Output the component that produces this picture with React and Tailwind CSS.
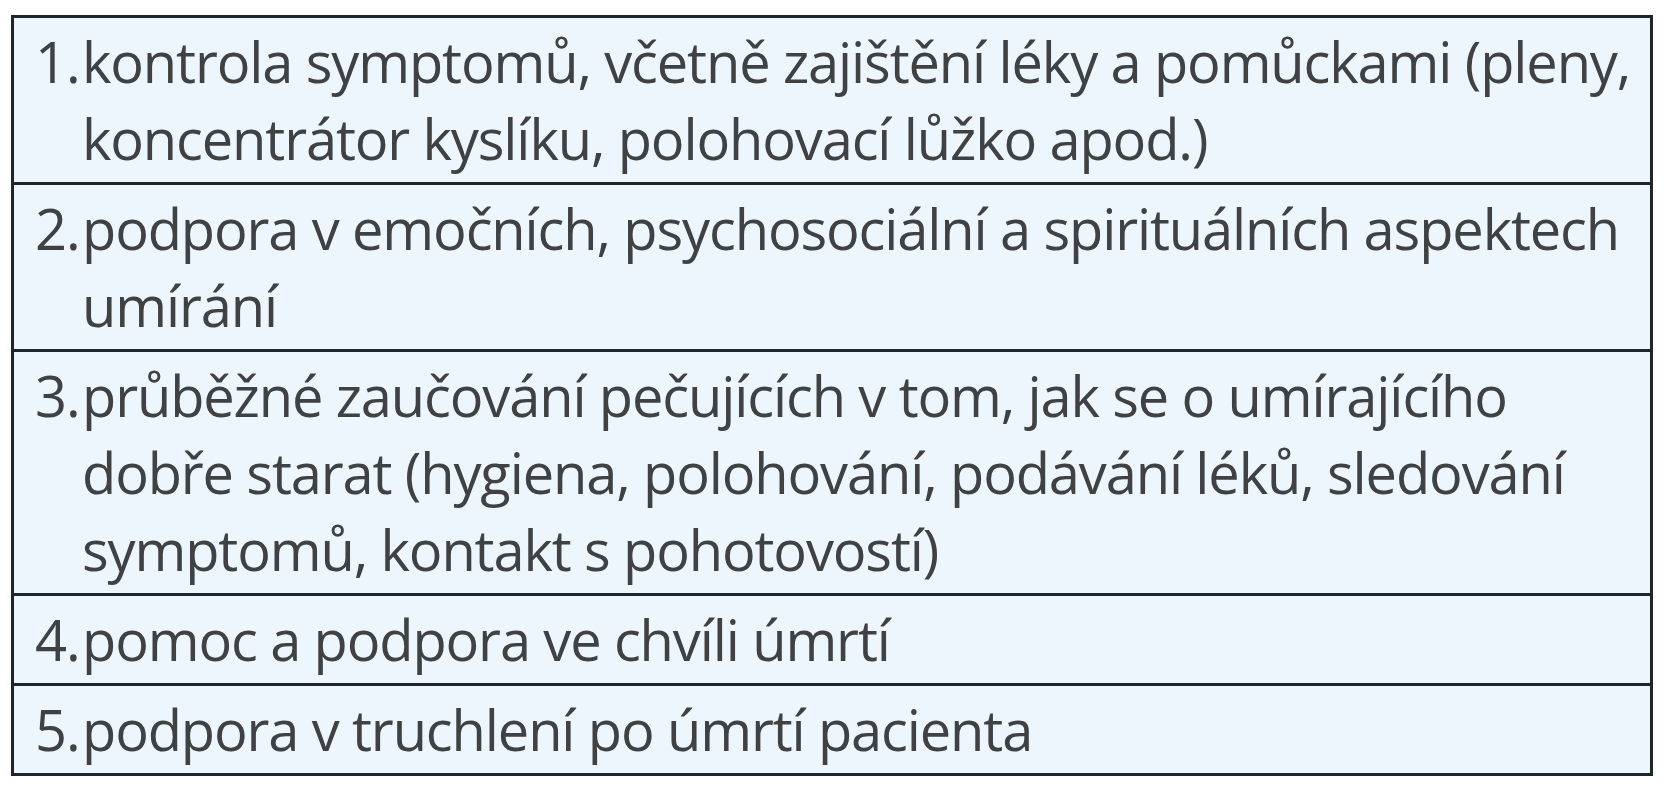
import React from 'react';

const rows = [
    {
        num: '1.',
        lines: [
            'kontrola symptomů, včetně zajištění léky a pomůckami (pleny,',
            'koncentrátor kyslíku, polohovací lůžko apod.)',
        ],
    },
    {
        num: '2.',
        lines: ['podpora v emočních, psychosociální a spirituálních aspektech', 'umírání'],
    },
    {
        num: '3.',
        lines: [
            'průběžné zaučování pečujících v tom, jak se o umírajícího',
            'dobře starat (hygiena, polohování, podávání léků, sledování',
            'symptomů, kontakt s pohotovostí)',
        ],
    },
    { num: '4.', lines: ['pomoc a podpora ve chvíli úmrtí'] },
    { num: '5.', lines: ['podpora v truchlení po úmrtí pacienta'] },
];

const App = () => {
    return (
        <div className="w-[1674px] h-[800px] bg-white pt-[15px] pl-[11px]">
            <div
                className="w-[1642px] border-[3px] border-[#1f2529] bg-[#eef6fd] text-[#3f4142]"
                style={{ fontFamily: '"Open Sans", sans-serif' }}
            >
                {rows.map((row, i) => (
                    <div
                        key={row.num}
                        className={`flex pl-[21px] pt-[5px] pb-[5px] text-[56px] leading-[77px] tracking-[-0.02em] ${
                            i < rows.length - 1 ? 'border-b-[3px] border-[#1f2529]' : ''
                        }`}
                    >
                        <span className="w-[47px] shrink-0">{row.num}</span>
                        <div className="flex flex-col">
                            {row.lines.map((line) => (
                                <span key={line} className="whitespace-nowrap">
                                    {line}
                                </span>
                            ))}
                        </div>
                    </div>
                ))}
            </div>
        </div>
    );
};

export default App;
